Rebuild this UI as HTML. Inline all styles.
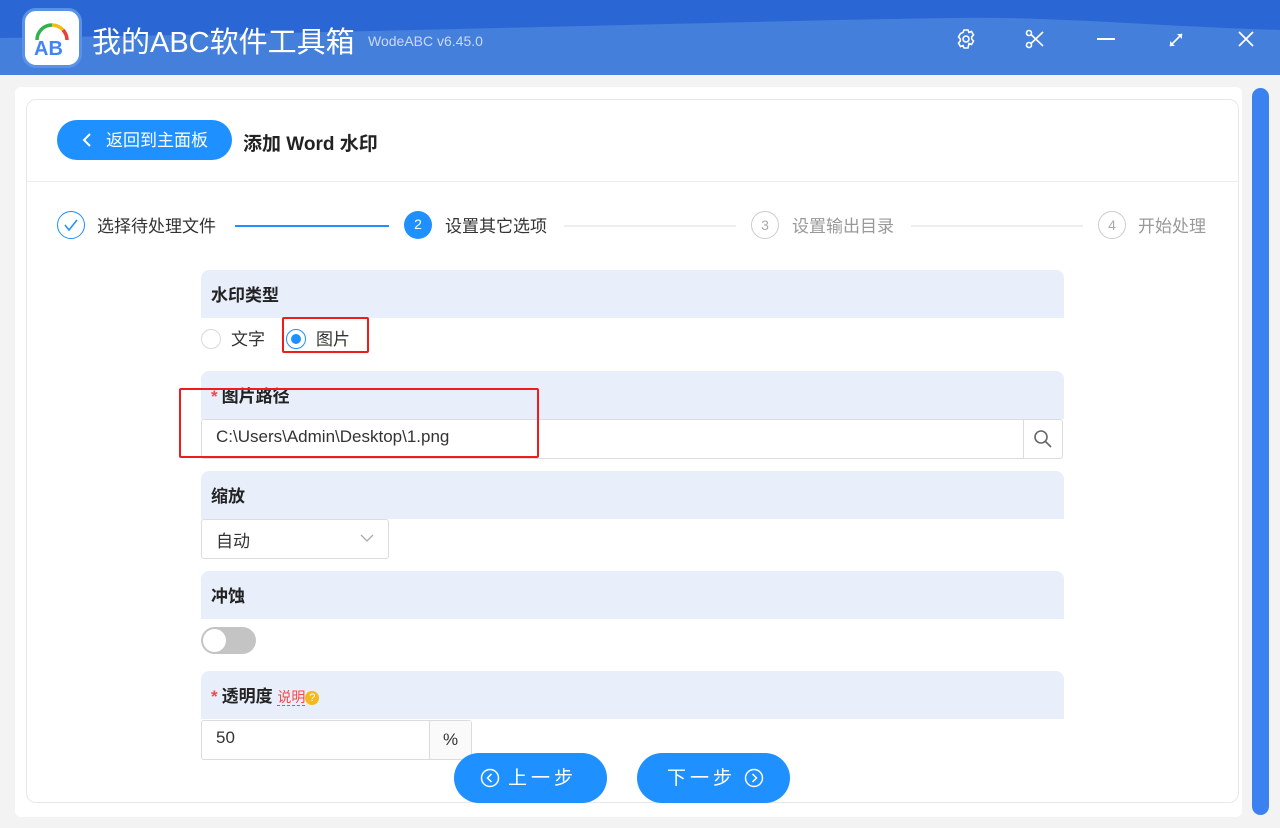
<!DOCTYPE html>
<html><head><meta charset="utf-8"><style>
*{margin:0;padding:0;box-sizing:border-box}
body{width:1280px;height:828px;overflow:hidden;background:#f3f3f3;font-family:"Liberation Sans","Noto Sans CJK SC",sans-serif;position:relative;color:#333}
.hdr{position:absolute;left:0;top:0;width:1280px;height:75px;background:#457fdc;overflow:hidden}
.abs{position:absolute}
.sec{position:absolute;left:201px;width:863px;height:48px;background:#e8effb;border-radius:8px 8px 0 0;font-size:17px;font-weight:bold;color:#222;padding:11px 0 0 10px}
.star{color:#f5484a;margin-right:4px}
.inp{position:absolute;background:#fff;border:1px solid #dcdcdc;border-radius:3px;font-size:17px;color:#333;padding:7px 0 0 14px}
.btn{position:absolute;top:753px;width:153px;height:50px;border-radius:25px;background:#1e90ff;color:#fff;font-size:19px;text-align:center;line-height:52px;letter-spacing:4px}
.step{position:absolute;top:212px;font-size:17px}
.circ{position:absolute;top:211px;width:28px;height:28px;border-radius:50%;text-align:center;line-height:26px;font-size:14px}
</style></head><body>
<div class="hdr">
<svg class="abs" style="left:0;top:0" width="1280" height="75"><path d="M0 0H1280V30C1150 26 1050 16 950 18 700 22 400 32 0 38Z" fill="#2a67d4"/></svg>
<div class="abs" style="left:22px;top:8px;width:60px;height:60px;border-radius:14px;background:#fff;border:3px solid #5a92ea"></div>
<svg class="abs" style="left:28px;top:14px" width="48" height="48"><path d="M9 26A15 15 0 0 1 24 11" stroke="#2fb34a" stroke-width="3.5" fill="none"/><path d="M24 11A15 15 0 0 1 35 16" stroke="#f6b91c" stroke-width="3.5" fill="none"/><path d="M35 16A15 15 0 0 1 39 26" stroke="#e94235" stroke-width="3.5" fill="none"/><text x="6" y="41" font-size="20" font-weight="bold" fill="#4285f4" font-family="Liberation Sans">AB</text></svg>
<div class="abs" style="left:92px;top:19px;font-size:29px;color:#fff">我的ABC软件工具箱</div>
<div class="abs" style="left:368px;top:33px;font-size:14px;color:#c9daf6">WodeABC v6.45.0</div>
<svg class="abs" style="left:955px;top:28px" width="22" height="22" fill="none" stroke="#fff" stroke-width="1.6"><circle cx="11" cy="11" r="3"/><path d="M9 2h4l1 2.5 2.5-1 2 3.4-1.8 2.1v2l1.8 2.1-2 3.4-2.5-1L13 20H9l-1-2.5-2.5 1-2-3.4L5.3 13v-2L3.5 8.9l2-3.4L8 4.5Z"/></svg>
<svg class="abs" style="left:1025px;top:29px" width="22" height="20" fill="none" stroke="#fff" stroke-width="1.6"><circle cx="4" cy="4" r="2.5"/><circle cx="4" cy="16" r="2.5"/><path d="M6 5.5L18 17M6 14.5L18 3"/></svg>
<div class="abs" style="left:1097px;top:38px;width:18px;height:2px;background:#fff"></div>
<svg class="abs" style="left:1166px;top:30px" width="20" height="20" stroke="#fff" stroke-width="1.6" fill="#fff"><path d="M4 16L16 4"/><path d="M16 4h-5l5 5zM4 16h5l-5-5z" stroke="none"/></svg>
<svg class="abs" style="left:1238px;top:31px" width="16" height="16" stroke="#fff" stroke-width="1.8"><path d="M1 1L15 15M15 1L1 15"/></svg>
</div>
<div class="abs" style="left:15px;top:87px;width:1227px;height:730px;background:#fff;border-radius:6px"></div>
<div class="abs" style="left:26px;top:99px;width:1213px;height:704px;border:1px solid #e8e8e8;border-radius:10px;background:#fff"></div>
<div class="abs" style="left:1252px;top:88px;width:17px;height:727px;border-radius:9px;background:#3b82f0"></div>
<div class="abs" style="left:26px;top:181px;width:1213px;height:1px;background:#ececec"></div>
<div class="abs" style="left:57px;top:120px;width:175px;height:40px;border-radius:20px;background:#1e90ff;color:#fff;font-size:17px;line-height:42px;padding-left:49px">返回到主面板</div>
<svg class="abs" style="left:81px;top:132px" width="12" height="16" stroke="#fff" stroke-width="2" fill="none"><path d="M9 2L3 8l6 6"/></svg>
<div class="abs" style="left:243px;top:129px;font-size:19px;font-weight:bold;color:#222">添加 Word 水印</div>
<div class="circ" style="left:57px;border:1px solid #1e90ff"><svg width="26" height="26" stroke="#1e90ff" stroke-width="1.5" fill="none"><path d="M7 13l4 5 8-10"/></svg></div>
<div class="step" style="left:97px">选择待处理文件</div>
<div class="abs" style="left:235px;top:225px;width:154px;height:2px;background:#1e90ff"></div>
<div class="circ" style="left:404px;background:#1e90ff;color:#fff">2</div>
<div class="step" style="left:445px">设置其它选项</div>
<div class="abs" style="left:564px;top:225px;width:172px;height:2px;background:#eee"></div>
<div class="circ" style="left:751px;border:1px solid #ccc;color:#aaa">3</div>
<div class="step" style="left:792px;color:#999">设置输出目录</div>
<div class="abs" style="left:911px;top:225px;width:172px;height:2px;background:#eee"></div>
<div class="circ" style="left:1098px;border:1px solid #ccc;color:#aaa">4</div>
<div class="step" style="left:1138px;color:#999">开始处理</div>

<div class="sec" style="top:270px">水印类型</div>
<div class="abs" style="left:201px;top:329px;width:20px;height:20px;border-radius:50%;border:1px solid #d8d8d8"></div>
<div class="abs" style="left:231px;top:325px;font-size:17px">文字</div>
<div class="abs" style="left:286px;top:329px;width:20px;height:20px;border-radius:50%;border:1px solid #1e90ff"><div style="margin:4px;width:10px;height:10px;border-radius:50%;background:#1e90ff"></div></div>
<div class="abs" style="left:316px;top:325px;font-size:17px">图片</div>
<div class="abs" style="left:282px;top:317px;width:87px;height:36px;border:2px solid #f01c1c;border-radius:2px"></div>

<div class="sec" style="top:371px"><span class="star">*</span>图片路径</div>
<div class="inp" style="left:201px;top:419px;width:862px;height:40px">C:\Users\Admin\Desktop\1.png</div>
<div class="abs" style="left:1023px;top:420px;width:1px;height:38px;background:#dcdcdc"></div>
<svg class="abs" style="left:1033px;top:429px" width="20" height="20" stroke="#666" stroke-width="1.6" fill="none"><circle cx="8" cy="8" r="6"/><path d="M12.5 12.5L18 18"/></svg>
<div class="abs" style="left:179px;top:388px;width:360px;height:70px;border:2px solid #f01c1c;border-radius:2px"></div>

<div class="sec" style="top:471px">缩放</div>
<div class="inp" style="left:201px;top:519px;width:188px;height:40px">自动</div>
<svg class="abs" style="left:360px;top:533px" width="14" height="10" stroke="#aaa" stroke-width="1.3" fill="none"><path d="M1 2l6 6 6-6"/></svg>

<div class="sec" style="top:571px">冲蚀</div>
<div class="abs" style="left:201px;top:627px;width:55px;height:27px;border-radius:14px;background:#c4c4c4"><div style="margin:2px;width:23px;height:23px;border-radius:50%;background:#fff"></div></div>

<div class="sec" style="top:671px"><span class="star">*</span>透明度 <span style="font-weight:normal;color:#f5484a;font-size:14px;border-bottom:1px dashed #f5484a">说明</span><span style="display:inline-block;width:14px;height:14px;border-radius:50%;background:#f6b91c;color:#fff;font-size:11px;text-align:center;line-height:14px;font-weight:normal;vertical-align:1px">?</span></div>
<div class="inp" style="left:201px;top:720px;width:271px;height:40px">50</div>
<div class="abs" style="left:429px;top:721px;width:42px;height:38px;background:#fafafa;border-left:1px solid #dcdcdc;font-size:17px;text-align:center;line-height:38px">%</div>

<div class="btn" style="left:454px;padding-left:24px">上一步</div>
<svg class="abs" style="left:480px;top:768px" width="20" height="20" stroke="#fff" stroke-width="1.5" fill="none"><circle cx="10" cy="10" r="8.5"/><path d="M11.5 6L7.5 10l4 4"/></svg>
<div class="btn" style="left:637px;padding-right:24px">下一步</div>
<svg class="abs" style="left:744px;top:768px" width="20" height="20" stroke="#fff" stroke-width="1.5" fill="none"><circle cx="10" cy="10" r="8.5"/><path d="M8.5 6l4 4-4 4"/></svg>
</body></html>
